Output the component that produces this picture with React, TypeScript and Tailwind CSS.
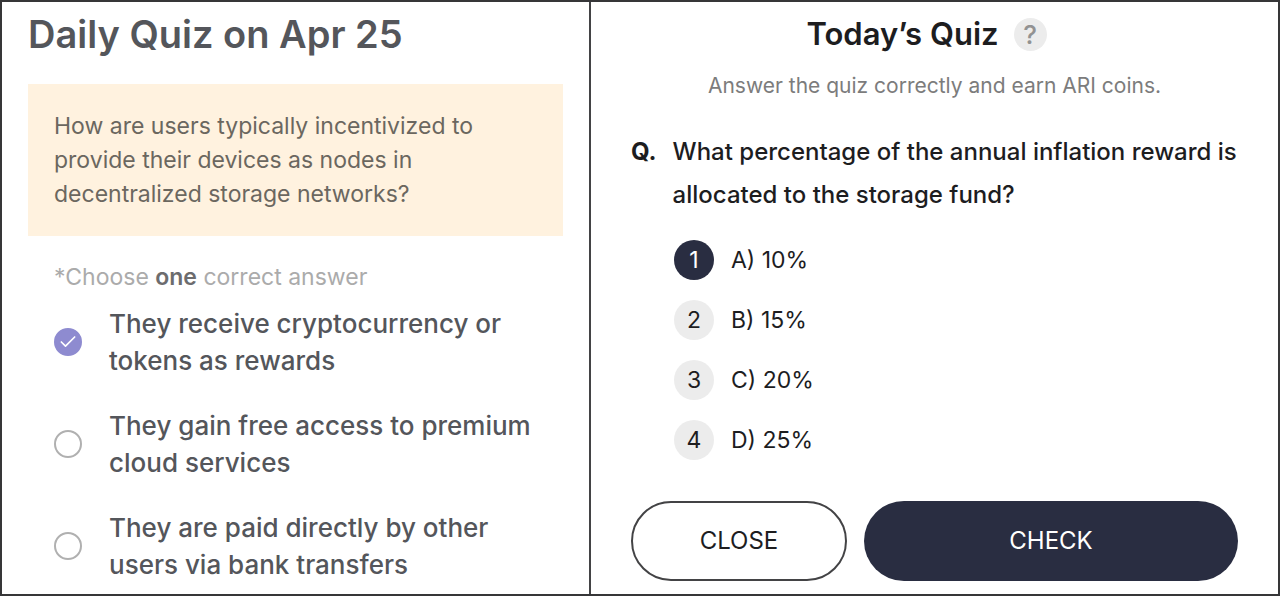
import { useState } from "react";
import { Check } from "lucide-react";

const dailyOptions = [
  "They receive cryptocurrency or tokens as rewards",
  "They gain free access to premium cloud services",
  "They are paid directly by other users via bank transfers",
];

const todayOptions = ["A) 10%", "B) 15%", "C) 20%", "D) 25%"];

function DailyQuiz() {
  const [selected, setSelected] = useState(0);

  return (
    <section className="border-r-2 border-[#434345] px-[26px] pt-[10px] pb-2 text-[#54565b]">
      <h1 className="text-[38px] leading-[44px] font-semibold">Daily Quiz on Apr 25</h1>

      <p className="mt-7 bg-[#fff2df] px-[26px] py-[25px] text-[23px] leading-[34px] text-[#6b675f]">
        How are users typically incentivized to provide their devices as nodes in decentralized storage networks?
      </p>

      <fieldset className="pl-[26px]">
        <legend className="pt-6 text-[23px] leading-[34px] text-[#ababab]">
          *Choose <strong className="font-semibold text-[#6c6c6e]">one</strong> correct answer
        </legend>
        <div className="mt-[11px] flex flex-col gap-7">
          {dailyOptions.map((option, i) => (
            <label key={option} className="flex items-center gap-[27px] text-[26px] leading-[37px] font-medium">
              <span className="grid shrink-0 place-items-center">
                <input
                  type="radio"
                  name="daily"
                  checked={selected === i}
                  onChange={() => setSelected(i)}
                  className="col-start-1 row-start-1 size-7 appearance-none rounded-full border-2 border-[#b0b0b0] checked:border-[#8e8bd0] checked:bg-[#8e8bd0]"
                />
                {selected === i && (
                  <Check className="pointer-events-none col-start-1 row-start-1 size-5 text-white" strokeWidth={2} />
                )}
              </span>
              <span>{option}</span>
            </label>
          ))}
        </div>
      </fieldset>
    </section>
  );
}

function TodaysQuiz() {
  const [selected, setSelected] = useState(0);

  return (
    <section className="px-10 pt-[10px] pb-3 text-[#1d1d1f]">
      <div className="flex items-center justify-center gap-[15px] pr-4">
        <h2 className="text-[31px] leading-[44px] font-semibold">Today’s Quiz</h2>
        <button
          type="button"
          aria-label="Help"
          className="size-[33px] rounded-full bg-[#ececec] text-[26px] leading-[33px] font-medium text-[#929292]"
        >
          ?
        </button>
      </div>
      <p className="mt-[13px] text-center text-[21px] leading-[34px] text-[#7c7c7c]">
        Answer the quiz correctly and earn ARI coins.
      </p>

      <div className="mt-[27px] flex gap-4 text-[24px] leading-[43px] font-medium">
        <span className="font-bold">Q.</span>
        <p>What percentage of the annual inflation reward is allocated to the storage fund?</p>
      </div>

      <div role="radiogroup" aria-label="Answers" className="mt-6 ml-[43px] flex flex-col gap-5">
        {todayOptions.map((option, i) => (
          <label key={option} className="flex items-center gap-[17px] text-[23px] leading-10">
            <input
              type="radio"
              name="today"
              checked={selected === i}
              onChange={() => setSelected(i)}
              className="sr-only"
            />
            <span
              className={
                selected === i
                  ? "size-10 rounded-full bg-[#292d41] text-center text-white"
                  : "size-10 rounded-full bg-[#ececec] text-center"
              }
            >
              {i + 1}
            </span>
            {option}
          </label>
        ))}
      </div>

      <div className="mt-[41px] grid grid-cols-[216fr_374fr] gap-[17px] text-[24px]">
        <button type="button" className="h-20 rounded-full border-2 border-[#434345]">
          CLOSE
        </button>
        <button type="button" className="h-20 rounded-full bg-[#292d41] text-white">
          CHECK
        </button>
      </div>
    </section>
  );
}

export default function App() {
  return (
    <main className="grid min-h-screen grid-cols-[589fr_687fr] border-2 border-[#363638] bg-white font-['Inter',sans-serif]">
      <DailyQuiz />
      <TodaysQuiz />
    </main>
  );
}
